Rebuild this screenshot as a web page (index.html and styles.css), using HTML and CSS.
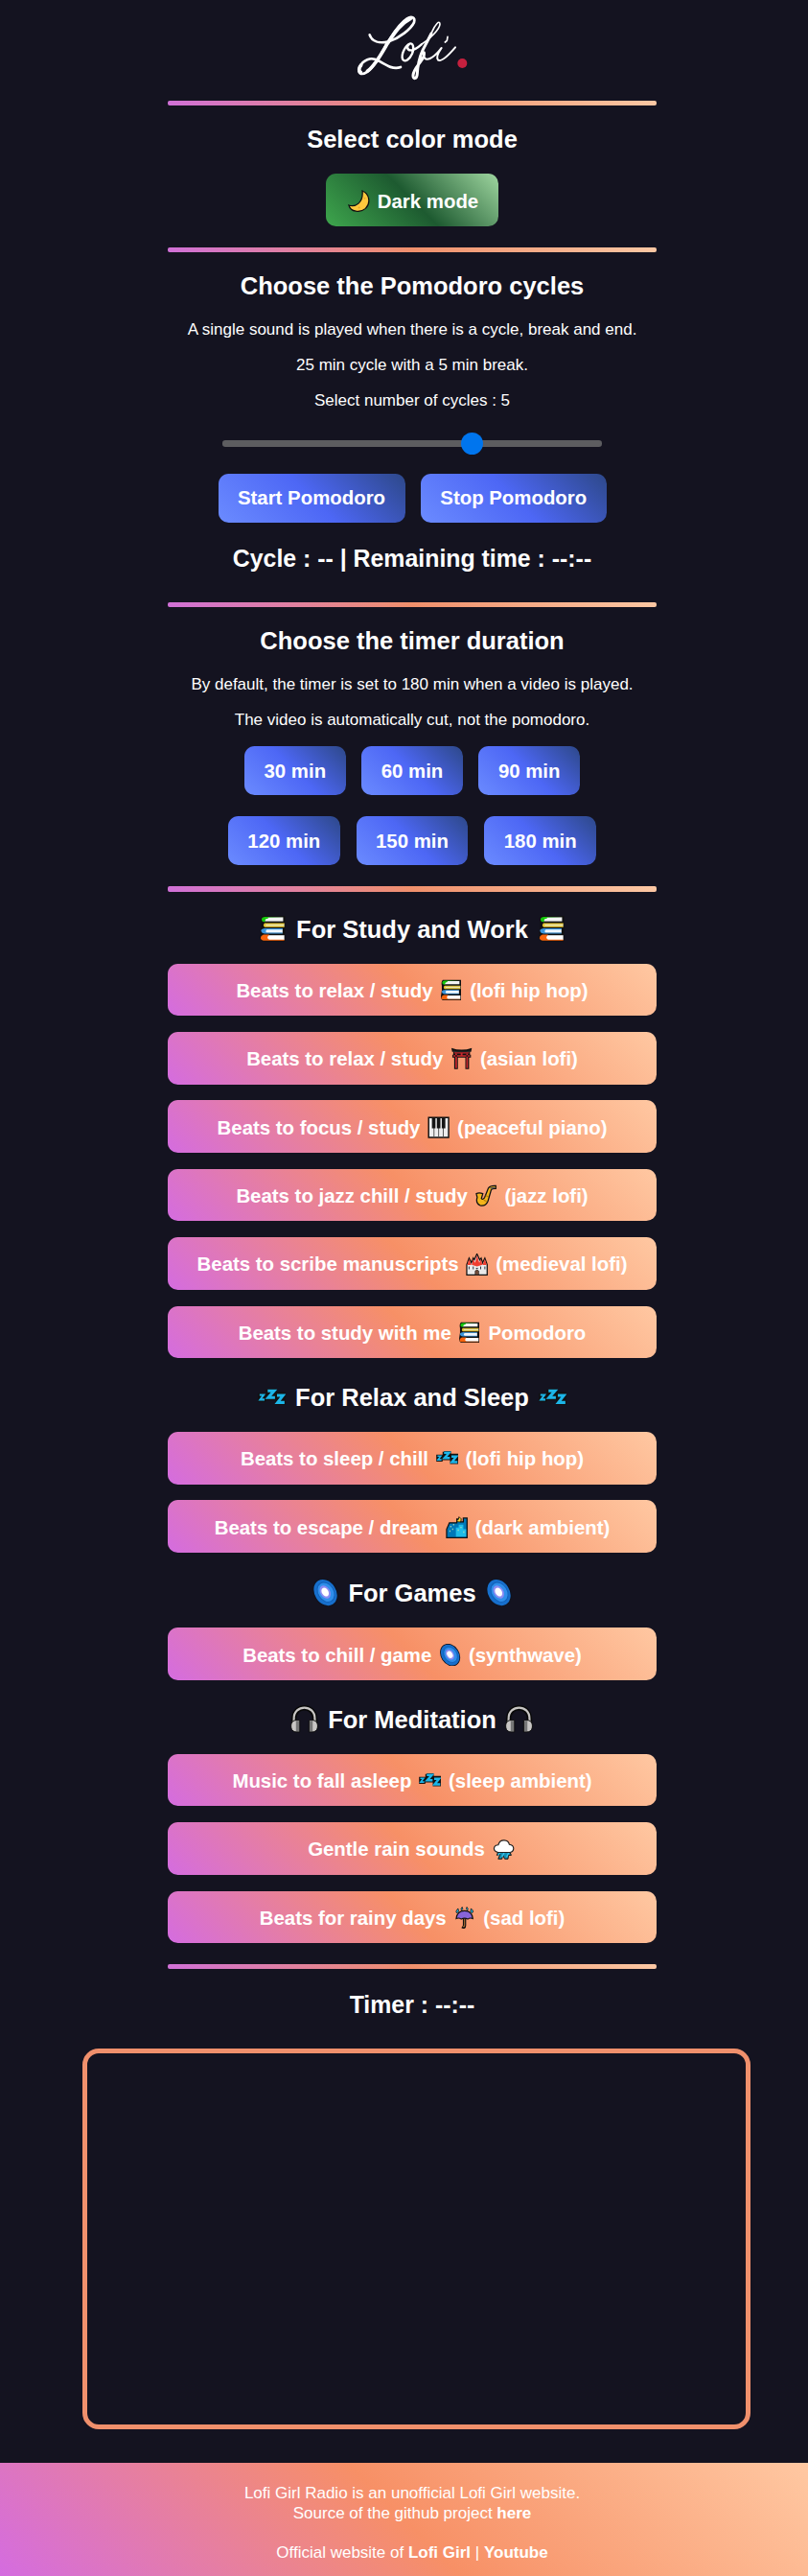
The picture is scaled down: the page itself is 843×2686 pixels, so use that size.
FILE: index.html
```html
<!DOCTYPE html>
<html lang="en">
<head>
<meta charset="utf-8">
<title>Lofi Girl Radio</title>
<link rel="stylesheet" href="styles.css">
</head>
<body>
<svg class="sprite" aria-hidden="true">
  <symbol id="moon" viewBox="0 0 24 24"><path d="M15.5 1C23 4 25 14 19 20C13 25 3 24 1 16.500C8 19 17 14 15.500 1Z" fill="#ffc83d" stroke="#111" stroke-width="1.300"/><circle cx="18" cy="9" r="1" fill="#e9a52c"/><circle cx="12" cy="19" r="1" fill="#e9a52c"/></symbol>
  <symbol id="books" viewBox="0 0 24 24"><path d="M3 .8H22.700V22.800H3Q.5 21 1.200 17L2 12V7Q1 3 3 .8Z" fill="#111"/><path d="M5 2H21V5.500H5Z" fill="#f3f3f3"/><path d="M21 1.600H5Q2 2 2.500 4.500Q3 6.300 5.500 6V5Q5.500 3 8 3V2Z" fill="#16c60c"/><path d="M5 7.500H22V10H5Z" fill="#e9e4b0"/><path d="M5 7H22V8H6V9.500H22V10.500H5Q3 9 5 7Z" fill="#e6c52e"/><path d="M5 12H20.500V15.500H5Z" fill="#eef6ff"/><path d="M20.500 11.500H5Q1.500 12 2 14Q2.500 16 5 16H20.500V15.200H7Q5 14 7 12.500H20.500Z" fill="#3a96dd"/><path d="M7 17.500H22V21.500H7Z" fill="#fff"/><path d="M9 17H4Q1.500 18 1.500 20Q2 22 4 22H22V21.300H9Q6 20 9 17Z" fill="#f7630c"/></symbol>
  <symbol id="torii" viewBox="0 0 24 24"><path d="M1 .7Q12 4.500 23 .7L22.200 5H21V8H22V11H20V23.500H16V11H8V23.500H4V11H2V8H3V5H1.800Z" fill="#111"/><path d="M3 3.500Q12 5.500 21 3.500V5H3Z" fill="#333"/><path d="M4 5.500H20V6.800H4ZM3 8.600H21V10H3ZM5.200 7V22.500H7V7ZM17 7V22.500H18.800V7ZM11 6.500H13V9H11Z" fill="#c8282d"/></symbol>
  <symbol id="piano" viewBox="0 0 24 24"><path d="M.5 .5H23.500V23.500H.5Z" fill="#111"/><path d="M2 2H22V22H2Z" fill="#eee"/><path d="M7 12V22M12 12V22M17 12V22" stroke="#555" stroke-width="1"/><path d="M4.800 1H8.600V13H4.800ZM10.100 1H13.900V13H10.100ZM15.400 1H19.200V13H15.400Z" fill="#151515"/></symbol>
  <symbol id="sax" viewBox="0 0 24 24"><path d="M2 10Q5 8.500 9 10L7.500 15Q9 17 11 14L15 4Q17 1 23 1.500V4.500Q19 4 18 6L14.500 18Q12 24 6 22.500Q1 20 3 14Z" fill="#f4b41a" stroke="#111" stroke-width="1.300"/><path d="M16 3.500L22 2.500V4L18 5Z" fill="#555"/><path d="M10 17L13 18M12 12L15 13" stroke="#a56a09"/></symbol>
  <symbol id="castle" viewBox="0 0 24 24"><path d="M1 23V12L3.500 5L6 10L8 5L9 7L12 .5L15 7L16.500 5L18 10L20.500 5L23 12V23Z" fill="#e9e9e9" stroke="#111" stroke-width="1.300"/><path d="M1.500 12.500L3.500 6L6 12.500ZM6.300 12L8 6L10 10L12 1.500L14.500 10L16.200 6L17.900 12L12 14ZM18 12.500L20.500 6L22.500 12.500Z" fill="#ef3e30"/><path d="M3.500 14V17M8 14V17M16 14V17M20.500 14V17M11 16H13" stroke="#26323f"/><path d="M10 23V19Q12 16 14 19V23Z" fill="#704c3b" stroke="#111" stroke-width=".5"/></symbol>
  <symbol id="zzz" viewBox="0 0 24 24"><path d="M.2 7H7V4H8.500V3H16V6H23.800V17H15V13H7V14.500H.2Z" fill="#111" transform="translate(0 1)"/><g fill="none" stroke="#1cb5e8"><path d="M1.500 9.500H5L2 13.500H5.800" stroke-width="1.700"/><path d="M8.500 6H14L9 11.700H14.800" stroke-width="2.500"/><path d="M16.500 10H21.700L17 16H23" stroke-width="2.500"/></g></symbol>
  <symbol id="city" viewBox="0 0 24 24"><path d="M1 23V14L4 7H12V3H16V6H19V2H23V23Z" fill="#0078b8" stroke="#111" stroke-width="1.300"/><path d="M11 12H14V9H19V14H22V22H11Z" fill="#1fbce8"/><path d="M5 11H6M8 9H9M4 16H5M7 14H8M13 15H14M16 12H17M19 17H20" stroke="#c9eab0" stroke-width="1.500"/><path d="M14 .8Q18 2 16 6Q12 7 12 4Q15 4 14 .8Z" fill="#ffd42a" stroke="#111" stroke-width=".8"/></symbol>
  <symbol id="galaxy" viewBox="0 0 24 24"><g transform="rotate(-32 12 12)"><ellipse cx="12" cy="12" rx="10" ry="12.800" fill="#10131f"/><ellipse cx="12" cy="12" rx="9.200" ry="11.900" fill="#176fcc"/><ellipse cx="12.500" cy="12" rx="6.800" ry="9" fill="#2f8eea" stroke="#1260b8" stroke-width=".8"/><ellipse cx="12" cy="11.500" rx="4.200" ry="6" fill="#8c8cf2"/><ellipse cx="12" cy="11.500" rx="2.800" ry="4" fill="#fff"/></g></symbol>
  <symbol id="headphones" viewBox="0 0 24 24"><path d="M3 17V12C3 -1 21 -1 21 12V17" fill="none" stroke="#090909" stroke-width="4.500"/><path d="M3 17V11.500C3 -1 21 -1 21 11.500V17" fill="none" stroke="#c8c6c4" stroke-width="1.800"/><path d="M4 13H8V23H4Q.5 22 .5 18Q.5 14 4 13ZM20 13H16V23H20Q23.500 22 23.500 18Q23.500 14 20 13Z" fill="#c8c6c4" stroke="#090909" stroke-width=".8"/><path d="M4.800 13.500H7.500V22.500H4.800ZM16.500 13.500H19.200V22.500H16.500Z" fill="#777"/></symbol>
  <symbol id="rain" viewBox="0 0 24 24"><path d="M6 14L4.500 18L8 17L6 22L10 22L11 18L13 22L16.500 22L17 18L20 18L18 13Z" fill="#168fb2" stroke="#111"/><path d="M8 15L6 18M13 14L10 20M18 14L15 20" stroke="#35c5f0" stroke-width="1.300"/><path d="M5.500 14.800Q1.500 14 1.500 10.500Q2 7 6 7Q7.500 1.700 12.500 2Q17 2.300 18 6.500Q22.500 7 22.500 11Q22 15 18 15Z" fill="#fff" stroke="#222" stroke-width="1.200"/></symbol>
  <symbol id="umbrella" viewBox="0 0 24 24"><path d="M12 13V20Q12 23 9.500 21.500" fill="none" stroke="#111" stroke-width="3.500"/><path d="M12 13V20Q12 22.500 10 21" fill="none" stroke="#a56a32" stroke-width="1.200"/><path d="M3 13Q4 4.500 12 4.500Q20 4.500 21 13Q18 11.500 15.500 13.500Q12 11.500 8.500 13.500Q6 11.500 3 13Z" fill="#8764d8" stroke="#111" stroke-width="1.100"/><path d="M4 7Q1.500 6 5 2Q7 5.500 4 7ZM9 4Q7 3 9.500 .5Q11 3 9 4ZM15 4Q13 3 14.500 .5Q17 3 15 4ZM20 7Q17.500 6 19 2Q23 5.500 20 7Z" fill="#23b7dd" stroke="#111" stroke-width=".8"/></symbol>
</svg>

<main class="page">
  <header class="header">
    <svg class="logo" viewBox="0 0 420 300" role="img" aria-label="Lofi">
      <g fill="none" stroke="#fff" stroke-linecap="round" stroke-linejoin="round">
        <path stroke-width="8" d="M77 109C84 130 107 137 137 130C170 119 206 91 216 70C221 53 207 50 194 58C166 76 150 108 131 136C111 173 91 211 67 226C50 237 38 228 45 211C56 187 80 177 103 189C130 205 151 219 174 210"/>
        <path stroke-width="11" d="M205 58C170 76 151 109 132 137C113 170 94 205 70 223M49 226C42 222 43 212 50 204"/>
        <path stroke-width="7" d="M203 137C188 143 175 170 180 185C187 198 203 184 210 168C218 148 212 132 202 137C191 144 194 159 208 157C219 156 230 147 239 139"/>
        <path stroke-width="5" d="M239 139C264 124 297 91 297 75C296 61 282 77 273 98L246 151"/>
        <path stroke-width="9" d="M270 105L243 157C232 182 227 211 226 230C225 249 212 249 213 235C214 217 234 200 246 178"/>
        <path stroke-width="6" d="M246 178C251 170 249 161 246 163C244 179 250 190 266 183C283 176 292 162 302 150C291 166 284 180 291 188C304 195 328 168 345 148"/>
        <path stroke-width="5" d="M321 115L319 127L313 132"/>
      </g>
      <circle cx="367" cy="198" r="15" fill="#c5203e"/>
    </svg>
  </header>
  <hr class="rule">

  <section class="section mode">
    <h2 class="title">Select color mode</h2>
    <button class="btn btn-green"><svg class="emoji"><use href="#moon"/></svg> Dark mode</button>
  </section>
  <hr class="rule">

  <section class="section pomodoro">
    <h2 class="title">Choose the Pomodoro cycles</h2>
    <p class="text">A single sound is played when there is a cycle, break and end.</p>
    <p class="text">25 min cycle with a 5 min break.</p>
    <p class="text">Select number of cycles : 5</p>
    <div class="slider"><span class="thumb"></span></div>
    <div class="row">
      <button class="btn btn-blue start">Start Pomodoro</button>
      <button class="btn btn-blue stop">Stop Pomodoro</button>
    </div>
    <h3 class="title status">Cycle : -- | Remaining time : --:--</h3>
  </section>
  <hr class="rule">

  <section class="section duration">
    <h2 class="title">Choose the timer duration</h2>
    <p class="text">By default, the timer is set to 180 min when a video is played.</p>
    <p class="text">The video is automatically cut, not the pomodoro.</p>
    <div class="row short">
      <button class="btn btn-blue">30 min</button>
      <button class="btn btn-blue">60 min</button>
      <button class="btn btn-blue">90 min</button>
    </div>
    <div class="row long">
      <button class="btn btn-blue">120 min</button>
      <button class="btn btn-blue">150 min</button>
      <button class="btn btn-blue">180 min</button>
    </div>
  </section>
  <hr class="rule">

  <section class="section stations">
    <h2 class="title"><svg class="emoji"><use href="#books"/></svg> For Study and Work <svg class="emoji"><use href="#books"/></svg></h2>
    <div class="list">
      <button class="btn btn-track">Beats to relax / study <svg class="emoji"><use href="#books"/></svg> (lofi hip hop)</button>
      <button class="btn btn-track">Beats to relax / study <svg class="emoji"><use href="#torii"/></svg> (asian lofi)</button>
      <button class="btn btn-track">Beats to focus / study <svg class="emoji"><use href="#piano"/></svg> (peaceful piano)</button>
      <button class="btn btn-track">Beats to jazz chill / study <svg class="emoji"><use href="#sax"/></svg> (jazz lofi)</button>
      <button class="btn btn-track">Beats to scribe manuscripts <svg class="emoji"><use href="#castle"/></svg> (medieval lofi)</button>
      <button class="btn btn-track">Beats to study with me <svg class="emoji"><use href="#books"/></svg> Pomodoro</button>
    </div>
    <h2 class="title"><svg class="emoji"><use href="#zzz"/></svg> For Relax and Sleep <svg class="emoji"><use href="#zzz"/></svg></h2>
    <div class="list">
      <button class="btn btn-track">Beats to sleep / chill <svg class="emoji"><use href="#zzz"/></svg> (lofi hip hop)</button>
      <button class="btn btn-track">Beats to escape / dream <svg class="emoji"><use href="#city"/></svg> (dark ambient)</button>
    </div>
    <h2 class="title games"><svg class="emoji"><use href="#galaxy"/></svg> For Games <svg class="emoji"><use href="#galaxy"/></svg></h2>
    <div class="list">
      <button class="btn btn-track">Beats to chill / game <svg class="emoji"><use href="#galaxy"/></svg> (synthwave)</button>
    </div>
    <h2 class="title"><svg class="emoji"><use href="#headphones"/></svg> For Meditation <svg class="emoji"><use href="#headphones"/></svg></h2>
    <div class="list">
      <button class="btn btn-track">Music to fall asleep <svg class="emoji"><use href="#zzz"/></svg> (sleep ambient)</button>
      <button class="btn btn-track">Gentle rain sounds <svg class="emoji"><use href="#rain"/></svg></button>
      <button class="btn btn-track">Beats for rainy days <svg class="emoji"><use href="#umbrella"/></svg> (sad lofi)</button>
    </div>
  </section>
  <hr class="rule">

  <h3 class="title timer">Timer : --:--</h3>
  <div class="player"></div>
</main>

<footer class="footer">
  <p>Lofi Girl Radio is an unofficial Lofi Girl website.<br>Source of the github project <b>here</b></p>
  <p>Official website of <b>Lofi Girl</b> | <b>Youtube</b></p>
</footer>
</body>
</html>
```
FILE: styles.css
```css
* { box-sizing: border-box; }

body {
  margin: 0;
  min-height: 2686px;
  display: flex;
  flex-direction: column;
  background: #141320;
  color: #fff;
  font-family: Arial, "Liberation Sans", sans-serif;
  font-size: 17px;
}

.sprite { display: none; }

.page {
  display: flex;
  flex-direction: column;
  align-items: center;
  padding-left: 17px;
  height: 2568.400px;
}

.header { height: 105px; }

.logo {
  display: block;
  width: 140px;
  height: 100px;
}

.rule {
  flex: none;
  width: 510px;
  height: 5.300px;
  margin: 0;
  border: 0;
  border-radius: 2px;
  background: linear-gradient(45deg, #d070d8, #f0906c 50%, #fcc8a4);
}

.section {
  display: flex;
  flex-direction: column;
  align-items: center;
  width: 510px;
  flex: none;
}

.mode { height: 147.700px; padding-top: 20px; }
.pomodoro { height: 364.700px; padding-top: 19.700px; }
.duration { height: 291px; padding-top: 19.500px; }
.stations { height: 1118.100px; padding-top: 24.200px; }

.title {
  flex: none;
  margin: 0;
  height: 30px;
  font-size: 25.500px;
  font-weight: bold;
  line-height: 30px;
  white-space: nowrap;
}

.text {
  margin: 0;
  line-height: 20px;
  white-space: nowrap;
}
.title + .text { margin-top: 21.500px; }
.text + .text { margin-top: 16.700px; }

.btn {
  height: 51px;
  padding: 0;
  border: 0;
  border-radius: 10.600px;
  color: #fff;
  font: bold 20.400px/24px Arial, "Liberation Sans", sans-serif;
  text-align: center;
  white-space: nowrap;
}

.btn-green {
  width: 180px;
  height: 55px;
  margin-top: 21px;
  padding-top: 2px;
  background: linear-gradient(45deg, #3ea64d, #1d5a30 50%, #9fd6a0);
}

.btn-blue { background: linear-gradient(45deg, #6b8bff, #4d67f5 50%, #2d4889); }

.btn-track {
  width: 100%;
  height: 54.750px;
  padding-top: 2px;
  background: linear-gradient(45deg, #d46ce0, #f79066 50%, #ffc8a2);
}

.emoji {
  width: 1.140em;
  height: 1.140em;
  margin: 0 .1em;
  vertical-align: -.21em;
}

.slider {
  display: flex;
  align-items: center;
  justify-content: flex-start;
  width: 396px;
  height: 6.500px;
  margin-top: 31.500px;
  padding-left: 249px;
  border-radius: 3.200px;
  background: #5d5d60;
}

.thumb {
  flex: none;
  width: 23.400px;
  height: 23.400px;
  border-radius: 50%;
  background: #0075ee;
}

.row { display: flex; justify-content: center; gap: 16.500px; }
.slider + .row { margin-top: 28px; }
.start { width: 195px; }
.stop { width: 193.500px; }
.status { margin-top: 21.800px; font-size: 24.860px; }
.short { margin-top: 17.500px; gap: 16px; }
.short .btn { width: 106.200px; }
.long { margin-top: 22px; gap: 17px; }
.long .btn { width: 116.700px; }

.list {
  display: flex;
  flex-direction: column;
  gap: 16.650px;
  width: 100%;
  margin: 20.800px 0 26px;
}

.games { margin: .4px 0 .8px; }

.timer { margin-top: 21.700px; font-size: 24.860px; }

.player {
  flex: none;
  width: 697.500px;
  height: 397px;
  margin: 31px 0 0 9px;
  border: 5.300px solid #f0906c;
  border-radius: 17px;
}

.footer {
  flex: 1;
  padding: 22px 0 0 17px;
  background: linear-gradient(45deg, #d46ce0, #f79066 50%, #ffc8a2);
  line-height: 20.400px;
  text-align: center;
}

.footer p { margin: 0 0 20.400px; }
.footer p:last-child { margin: 0; }
```
